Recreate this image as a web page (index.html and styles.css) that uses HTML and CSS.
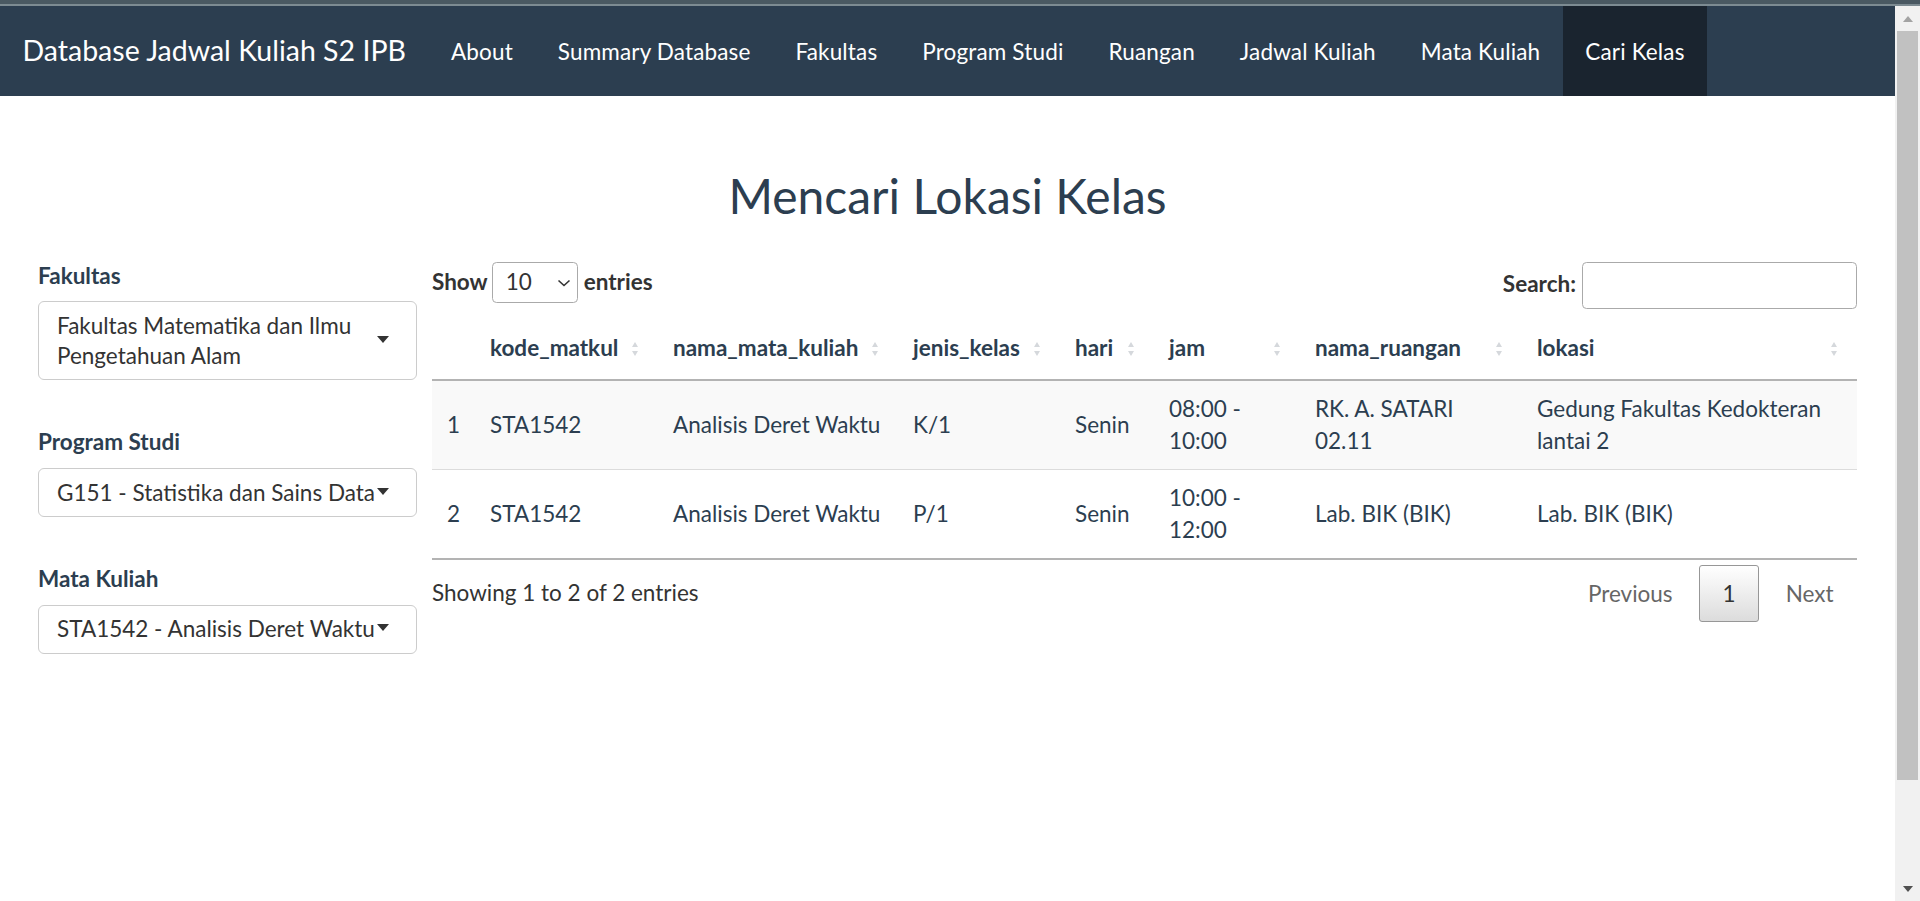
FILE: index.html
```html
<!DOCTYPE html>
<html lang="id">
<head>
<meta charset="utf-8">
<title>Database Jadwal Kuliah S2 IPB</title>
<link rel="stylesheet" href="styles.css">
</head>
<body>
<div class="strip"></div>
<div class="window">
  <div class="page">
    <nav class="navbar">
      <span class="brand">Database Jadwal Kuliah S2 IPB</span>
      <ul class="nav">
        <li><a href="#">About</a></li>
        <li><a href="#">Summary Database</a></li>
        <li><a href="#">Fakultas</a></li>
        <li><a href="#">Program Studi</a></li>
        <li><a href="#">Ruangan</a></li>
        <li><a href="#">Jadwal Kuliah</a></li>
        <li><a href="#">Mata Kuliah</a></li>
        <li class="active"><a href="#">Cari Kelas</a></li>
      </ul>
    </nav>

    <h2 class="title">Mencari Lokasi Kelas</h2>

    <div class="content">
      <aside class="sidebar">
        <div class="form-group">
          <label class="control-label">Fakultas</label>
          <div class="selectize"><div class="item">Fakultas Matematika dan Ilmu Pengetahuan Alam</div></div>
        </div>
        <div class="form-group">
          <label class="control-label">Program Studi</label>
          <div class="selectize"><div class="item">G151 - Statistika dan Sains Data</div></div>
        </div>
        <div class="form-group">
          <label class="control-label">Mata Kuliah</label>
          <div class="selectize"><div class="item">STA1542 - Analisis Deret Waktu</div></div>
        </div>
      </aside>

      <main class="main">
        <div class="dt-top">
          <label class="dt-length">Show
            <span class="select-wrap">
              <select class="len-select"><option>10</option></select>
              <svg class="chev" width="14" height="8" viewBox="0 0 14 8"><path d="M1.5 1.5 L7 6.5 L12.5 1.5" fill="none" stroke="#333" stroke-width="1.6"/></svg>
            </span>
            entries</label>
          <label class="dt-filter">Search:<input class="search" type="search"></label>
        </div>

        <table class="dt">
          <colgroup>
            <col class="c0"><col class="c1"><col class="c2"><col class="c3"><col class="c4"><col class="c5"><col class="c6"><col class="c7">
          </colgroup>
          <thead>
            <tr>
              <th class="idx"></th>
              <th class="sorting">kode_matkul</th>
              <th class="sorting">nama_mata_kuliah</th>
              <th class="sorting">jenis_kelas</th>
              <th class="sorting">hari</th>
              <th class="sorting">jam</th>
              <th class="sorting">nama_ruangan</th>
              <th class="sorting">lokasi</th>
            </tr>
          </thead>
          <tbody>
            <tr class="odd">
              <td>1</td><td>STA1542</td><td>Analisis Deret Waktu</td><td>K/1</td><td>Senin</td><td>08:00 - 10:00</td><td>RK. A. SATARI 02.11</td><td>Gedung Fakultas Kedokteran lantai 2</td>
            </tr>
            <tr class="even">
              <td>2</td><td>STA1542</td><td>Analisis Deret Waktu</td><td>P/1</td><td>Senin</td><td>10:00 - 12:00</td><td>Lab. BIK (BIK)</td><td>Lab. BIK (BIK)</td>
            </tr>
          </tbody>
        </table>

        <div class="dt-bottom">
          <div class="dt-info">Showing 1 to 2 of 2 entries</div>
          <div class="dt-paginate">
            <a class="pbtn disabled">Previous</a><a class="pbtn current">1</a><a class="pbtn disabled">Next</a>
          </div>
        </div>
      </main>
    </div>
  </div>

  <div class="scrollbar">
    <span class="sb-btn sb-up"></span>
    <div class="sb-thumb"></div>
    <span class="sb-btn sb-down"></span>
  </div>
</div>
</body>
</html>
```

FILE: styles.css
```css
* { box-sizing: border-box; }

html, body {
  margin: 0;
  height: 100%;
}

body {
  display: flex;
  flex-direction: column;
  overflow: hidden;
  font-family: Lato, "Open Sans", sans-serif;
  font-size: 22.5px;
  line-height: 1.42857;
  color: #2c3e50;
  background: #fff;
}

.strip {
  flex: none;
  height: 6px;
  background: #4a5962;
  border-bottom: 2px solid #7d8b92;
}

.window {
  flex: 1;
  display: flex;
  min-height: 0;
}

.page {
  flex: 1;
  min-width: 0;
}

/* navbar */
.navbar {
  display: flex;
  height: 90px;
  background: #2c3e50;
}

.brand {
  padding: 29.25px 22.5px;
  font-size: 28.5px;
  line-height: 31.5px;
  color: #fff;
}

.nav {
  display: flex;
  list-style: none;
  margin: 0;
  padding: 0;
}

.nav a {
  display: block;
  padding: 30px 22.5px 28.5px;
  line-height: 31.5px;
  letter-spacing: 0.15px;
  color: #fff;
  text-decoration: none;
}

.nav .active a {
  background: #1a242f;
}

/* title */
.title {
  margin: 74px 0 37px;
  font-size: 48px;
  line-height: 1.1;
  font-weight: 400;
  text-align: center;
  color: #2c3e50;
}

/* layout */
.content {
  display: flex;
  gap: 15px;
  padding: 0 38px;
}

.sidebar {
  flex: none;
  width: 379px;
}

.main {
  flex: 1;
  min-width: 0;
}

/* sidebar inputs */
.form-group {
  margin-bottom: 46px;
}

.control-label {
  display: block;
  margin-bottom: 9.5px;
  font-weight: 700;
}

.selectize {
  position: relative;
  padding: 8.5px 40px 8.5px 18px;
  border: 1px solid #ccc;
  border-radius: 6px;
  background: #fff;
  line-height: 30px;
  color: #333;
}

.selectize::after {
  content: "";
  position: absolute;
  right: 27px;
  top: 50%;
  margin-top: -5px;
  border-style: solid;
  border-width: 7px 6.5px 0;
  border-color: #333 transparent transparent;
}

/* datatable controls */
.dt-top {
  display: flex;
  justify-content: space-between;
  align-items: flex-start;
  height: 49px;
  margin-bottom: 8px;
  color: #333;
  font-weight: 700;
}

.dt-length {
  display: flex;
  align-items: center;
  gap: 4px;
  margin-top: 2px;
}

.select-wrap {
  position: relative;
  display: block;
  margin-right: 2px;
}

.len-select {
  display: block;
  width: 86px;
  height: 41px;
  padding: 0 0 0 13px;
  border: 1px solid #aaa;
  border-radius: 4.5px;
  background: transparent;
  font: inherit;
  font-weight: 400;
  color: #333;
  -webkit-appearance: none;
  appearance: none;
}

.chev {
  position: absolute;
  right: 7px;
  top: 17px;
  pointer-events: none;
}

.dt-filter {
  display: flex;
  align-items: center;
}

.search {
  width: 275px;
  height: 47px;
  margin: 2px 0 0 6px;
  padding: 0 7px;
  border: 1px solid #aaa;
  border-radius: 4.5px;
  font: inherit;
  font-weight: 400;
}

/* table */
.dt {
  width: 100%;
  border-collapse: collapse;
  table-layout: fixed;
  border-bottom: 2px solid #b3b3b3;
}

.c0 { width: 43px; }
.c1 { width: 183px; }
.c2 { width: 240px; }
.c3 { width: 162px; }
.c4 { width: 94px; }
.c5 { width: 146px; }
.c6 { width: 222px; }
.c7 { width: 335px; }

.dt th {
  position: relative;
  padding: 15px 15px;
  border-bottom: 2px solid #b3b3b3;
  line-height: 32px;
  font-weight: 700;
  text-align: left;
  white-space: nowrap;
}

.dt th.sorting {
  padding-right: 39px;
}

.dt th.sorting::before,
.dt th.sorting::after {
  content: "";
  position: absolute;
  right: 20px;
  border-style: solid;
  border-color: transparent;
}

.dt th.sorting::before {
  bottom: calc(50% + 1px);
  border-width: 0 3.5px 5.5px;
  border-bottom-color: #d5d8dc;
}

.dt th.sorting::after {
  top: calc(50% + 3px);
  border-width: 5.5px 3.5px 0;
  border-top-color: #d5d8dc;
}

.dt td {
  padding: 12px 15px;
  line-height: 32px;
  vertical-align: middle;
}

.dt tr.odd td {
  background: #f9f9f9;
}

.dt tr + tr td {
  border-top: 1px solid #dcdcdc;
}

/* footer */
.dt-bottom {
  display: flex;
  justify-content: space-between;
  align-items: flex-start;
  color: #333;
}

.dt-info {
  padding-top: 17px;
  line-height: 32px;
}

.dt-paginate {
  display: flex;
  padding-top: 5.5px;
}

.pbtn {
  display: block;
  min-width: 34px;
  margin-left: 3px;
  padding: 11.25px 22.5px;
  border: 1px solid transparent;
  border-radius: 3px;
  line-height: 32px;
  text-align: center;
  color: #666;
}

.pbtn.current {
  color: #333;
  border-color: #979797;
  background: linear-gradient(to bottom, #fff 0%, #dcdcdc 100%);
}

/* scrollbar */
.scrollbar {
  flex: none;
  width: 25px;
  display: flex;
  flex-direction: column;
  align-items: center;
  background: #f1f1f1;
}

.sb-btn {
  flex: none;
  display: flex;
  align-items: center;
  justify-content: center;
  width: 25px;
  height: 25px;
}

.sb-up::before,
.sb-down::before {
  content: "";
  border-style: solid;
  border-color: transparent;
}

.sb-up::before {
  border-width: 0 5.5px 6px;
  border-bottom-color: #a3a3a3;
}

.sb-down {
  margin-top: auto;
}

.sb-down::before {
  border-width: 6px 5.5px 0;
  border-top-color: #505050;
}

.sb-thumb {
  flex: none;
  width: 21px;
  height: 749px;
  background: #c1c1c1;
}
```
